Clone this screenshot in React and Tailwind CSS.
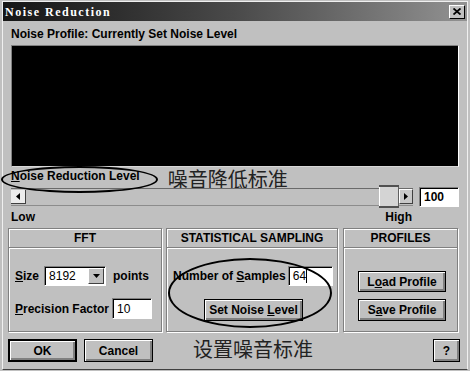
import React from "react";

function Btn({ children, className = "", def = false }) {
  return (
    <div
      className={`flex items-center justify-center bg-[#c0c0c0] text-[12px] font-bold text-black border-black shadow-[inset_1px_1px_0_#fff,inset_-2px_-2px_0_#808080] ${
        def ? "border-2" : "border"
      } ${className}`}
    >
      {children}
    </div>
  );
}

function Field({ children, className = "" }) {
  return (
    <div
      className={`flex items-center bg-white border border-t-[#808080] border-l-[#808080] border-b-white border-r-white shadow-[inset_1px_1px_0_#000] pl-[4px] text-[12px] ${className}`}
    >
      {children}
    </div>
  );
}

function Panel({ title, className = "", children }) {
  return (
    <div
      className={`flex flex-col border border-[#808080] shadow-[inset_1px_1px_0_#fff,1px_1px_0_#fff] ${className}`}
    >
      <div className="h-[19px] flex items-center justify-center border-b border-[#808080] shadow-[0_1px_0_#fff] text-[12px] font-bold">
        {title}
      </div>
      {children}
    </div>
  );
}

function Arrow({ dir }) {
  return (
    <svg width="4" height="7" viewBox="0 0 4 7">
      {dir === "left" ? (
        <path d="M4 0 L0 3.5 L4 7 Z" fill="#000" />
      ) : (
        <path d="M0 0 L4 3.5 L0 7 Z" fill="#000" />
      )}
    </svg>
  );
}

export default function App() {
  return (
    <div className="relative w-[470px] h-[371px] bg-[#c0c0c0] pt-[1px] px-[2px] pb-[1px] font-['Liberation_Sans',Arial,sans-serif] text-black overflow-hidden">
      <div className="h-full flex flex-col border border-[#f0f0f0] border-b-[#404040]">
        {/* title bar */}
        <div className="h-[19px] flex items-center pl-[2px] pr-[2px] bg-gradient-to-r from-[#161616] via-[#4a4a4a] to-[#929292]">
          <span className="font-['Liberation_Serif',serif] font-bold text-[12px] tracking-[1.5px] text-white">
            Noise Reduction
          </span>
          <div className="ml-auto w-[16px] h-[14px] flex items-center justify-center bg-[#c0c0c0] border border-t-white border-l-white border-r-black border-b-black">
            <svg width="8" height="7" viewBox="0 0 8 7">
              <path d="M0.5 0.5 L7.5 6.5 M7.5 0.5 L0.5 6.5" stroke="#000" strokeWidth="1.8" />
            </svg>
          </div>
        </div>

        <div className="flex flex-col pl-[8px] pr-[8px]">
          <div className="mt-[6px] h-[15px] leading-[15px] text-[12px] font-bold">
            Noise Profile: Currently Set Noise Level
          </div>
          <div className="mt-[3px] h-[122px] bg-black border border-t-[#808080] border-l-[#808080] border-r-white border-b-[#d8d8d8]" />

          {/* level label */}
          <div className="mt-[2px] h-[16px] flex items-start">
            <span className="h-[15px] leading-[15px] text-[12px] font-bold">
              <span className="underline">N</span>oise Reduction Level
            </span>
            <span className="ml-[28px] text-[20px] leading-[20px] text-[#222] font-['Noto_Sans_CJK_SC',sans-serif]">
              噪音降低标准
            </span>
          </div>

          {/* slider */}
          <div className="h-[23px] flex items-center">
            <div className="flex-1 h-[18px] flex items-center border-t border-b border-t-[#6a6a6a] border-b-[#8c8c8c]">
              <div className="w-[15px] h-[14px] flex items-center justify-center bg-[#ececec] border-r border-b border-r-[#404040] border-b-[#404040]">
                <Arrow dir="left" />
              </div>
              <div className="flex-1" />
              <div className="w-[20px] h-[23px] flex flex-col border-t-2 border-b-2 border-[#505050]">
                <div className="flex-1 bg-[#d4d4d4] border-l border-l-white border-r border-r-[#606060]" />
              </div>
              <div className="w-[14px] h-[15px] flex items-center justify-center bg-[#c8c8c8] border border-l-white border-t-white border-r-[#404040] border-b-[#404040]">
                <Arrow dir="right" />
              </div>
            </div>
            <Field className="ml-[6px] w-[40px] h-[20px] font-bold">100</Field>
          </div>

          <div className="mt-[2px] h-[15px] leading-[15px] flex text-[12px] font-bold">
            <span>Low</span>
            <span className="ml-auto mr-[47px]">High</span>
          </div>

          {/* panels */}
          <div className="mt-[3px] h-[104px] -ml-[3px] flex">
            <Panel title="FFT" className="w-[154px]">
              <div className="flex flex-col pl-[6px] pt-[18px] text-[12px] font-bold">
                <div className="h-[20px] flex items-center">
                  <span>
                    <span className="underline">S</span>ize
                  </span>
                  <Field className="ml-[5px] w-[62px] h-[20px] font-normal">
                    <span>8192</span>
                    <div className="ml-auto mr-[1px] w-[16px] h-[16px] flex items-center justify-center bg-[#c0c0c0] border border-t-white border-l-white border-r-[#404040] border-b-[#404040]">
                      <svg width="7" height="4" viewBox="0 0 7 4">
                        <path d="M0 0 L7 0 L3.5 4 Z" fill="#000" />
                      </svg>
                    </div>
                  </Field>
                  <span className="ml-[7px]">points</span>
                </div>
                <div className="mt-[12px] h-[21px] flex items-center">
                  <span>
                    <span className="underline">P</span>recision Factor
                  </span>
                  <Field className="ml-[3px] w-[40px] h-[21px] font-normal">10</Field>
                </div>
              </div>
            </Panel>

            <Panel title="STATISTICAL SAMPLING" className="ml-[4px] w-[172px]">
              <div className="flex flex-col pl-[6px] pt-[18px] text-[12px] font-bold">
                <div className="h-[20px] flex items-center">
                  <span>
                    Number of <span className="underline">S</span>amples
                  </span>
                  <Field className="ml-[2px] w-[45px] h-[20px] font-normal">
                    <span>64</span>
                    <span className="w-[1px] h-[14px] bg-black" />
                  </Field>
                </div>
                <Btn className="mt-[13px] ml-[31px] w-[99px] h-[22px]">
                  <span>
                    Set Noise <span className="underline">L</span>evel
                  </span>
                </Btn>
              </div>
            </Panel>

            <Panel title="PROFILES" className="ml-[5px] w-[115px]">
              <div className="flex flex-col pl-[14px] pt-[23px]">
                <Btn className="w-[88px] h-[21px]">
                  <span>
                    L<span className="underline">o</span>ad Profile
                  </span>
                </Btn>
                <Btn className="mt-[7px] w-[88px] h-[22px]">
                  <span>
                    S<span className="underline">a</span>ve Profile
                  </span>
                </Btn>
              </div>
            </Panel>
          </div>

          {/* bottom row */}
          <div className="mt-[7px] h-[23px] -ml-[3px] flex items-start">
            <Btn def className="w-[69px] h-[23px]">
              OK
            </Btn>
            <Btn className="ml-[7px] w-[69px] h-[23px]">Cancel</Btn>
            <span className="ml-[40px] text-[20px] leading-[20px] text-[#222] font-['Noto_Sans_CJK_SC',sans-serif]">
              设置噪音标准
            </span>
            <Btn className="ml-auto -mr-[1px] w-[27px] h-[23px]">?</Btn>
          </div>
        </div>
      </div>

      {/* annotation ellipses */}
      <div className="absolute left-[1px] top-[166px] w-[157px] h-[27px] rounded-[50%] border-2 border-black" />
      <div className="absolute left-[168px] top-[258px] w-[164px] h-[70px] rounded-[50%] border-2 border-black" />
    </div>
  );
}
